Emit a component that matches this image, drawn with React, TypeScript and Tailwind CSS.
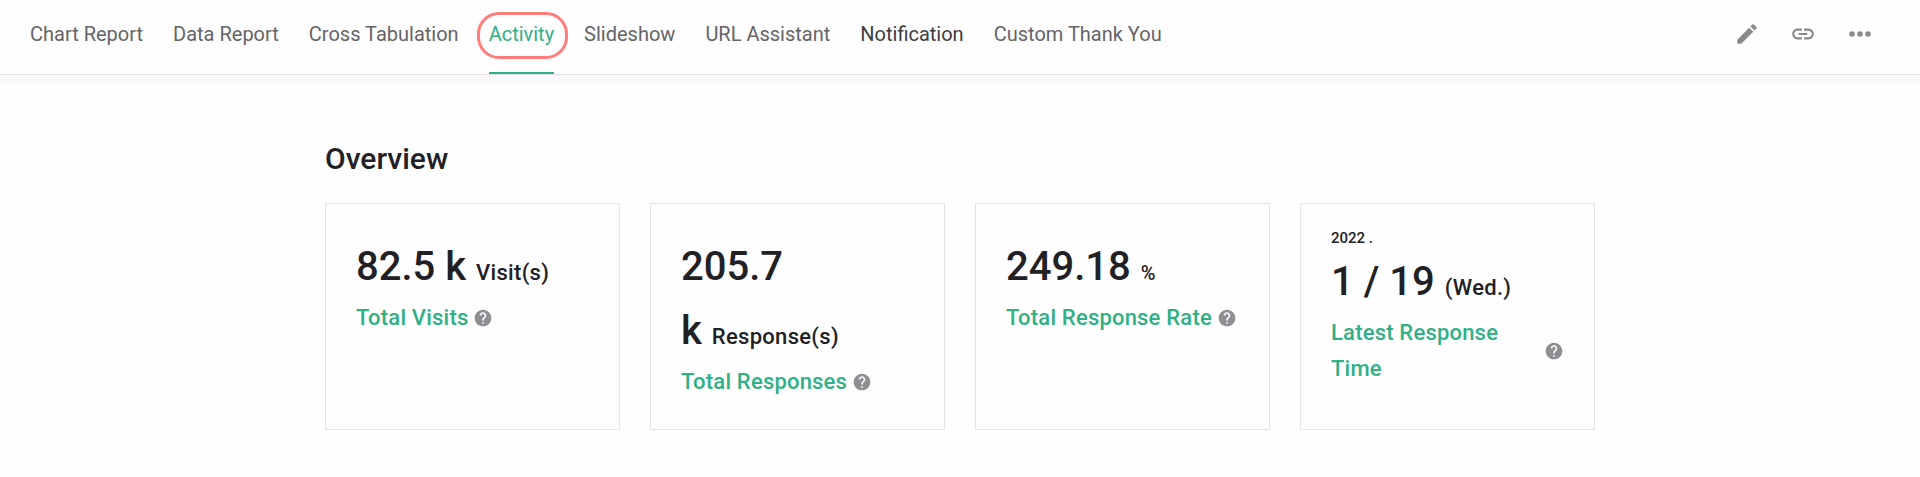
import React from 'react';
import { MdEdit, MdLink, MdHelp } from 'react-icons/md';

const tabs = ['Chart Report', 'Data Report', 'Cross Tabulation', 'Activity', 'Slideshow', 'URL Assistant', 'Notification', 'Custom Thank You'];

const Label = ({ children }: { children: React.ReactNode }) => (
  <div className="flex items-center mt-[1px] text-[22px] leading-[36px] font-medium tracking-[0.2px] text-[#2fb087]">
    <span>{children}</span>
    <MdHelp size={20} className="ml-[5px] shrink-0 text-[#8e8e93]" />
  </div>
);

const Stat = ({ value, suffix, unit, unitClass = 'text-[22px] tracking-[0.3px]' }: { value: string; suffix?: string; unit: string; unitClass?: string }) => (
  <div className="text-[40px] leading-[64px] font-medium text-[#212125]">
    {value}{' '}
    <span className="whitespace-nowrap">
      {suffix && `${suffix} `}
      <span className={`${unitClass} leading-none text-[#212125]`}>{unit}</span>
    </span>
  </div>
);

const Card = ({ children }: { children: React.ReactNode }) => (
  <div className="w-[295px] h-[227px] border border-[#e6e4ea] px-[30px] pt-[31px]">{children}</div>
);

export default function App() {
  return (
    <div className="min-h-[477px] bg-[#fefefe] font-['Roboto',sans-serif]">
      <div className="h-[75px] flex items-start justify-between pl-[30px] pr-[48px] border-b border-[#e2e0e5]">
        <div className="flex gap-[30px]">
          {tabs.map(tab => (
            <div
              key={tab}
              className={`relative h-[74px] pb-[4px] flex items-center text-[20px] border-b-2 ${
                tab === 'Activity'
                  ? 'text-[#2fb087] border-[#2fb087]'
                  : tab === 'Notification'
                    ? 'text-[#3d3d42] border-transparent'
                    : 'text-[#646468] border-transparent'
              }`}
            >
              {tab}
              {tab === 'Activity' && (
                <div className="absolute left-[-12px] right-[-14px] top-[12px] h-[47px] rounded-[22px] border-[3px] border-[#ff7d7b]" />
              )}
            </div>
          ))}
        </div>
        <div className="flex items-center h-[68px] gap-[30px] text-[#8a8a8e]">
          <MdEdit size={26} />
          <MdLink size={26} className="mr-[2px]" />
          <svg width="24" height="8" viewBox="0 0 24 8" fill="currentColor">
            <circle cx="4" cy="4" r="2.8" />
            <circle cx="12" cy="4" r="2.8" />
            <circle cx="20" cy="4" r="2.8" />
          </svg>
        </div>
      </div>
      <div className="h-[10px] bg-[#faf8fb]" />
      <div className="pl-[325px] pt-[58px]">
        <h2 className="text-[30px] leading-[32px] font-medium text-[#212125]">Overview</h2>
        <div className="flex gap-[30px] mt-[28px]">
          <Card>
            <Stat value="82.5" suffix="k" unit="Visit(s)" />
            <Label>Total Visits</Label>
          </Card>
          <Card>
            <Stat value="205.7" suffix="k" unit="Response(s)" />
            <Label>Total Responses</Label>
          </Card>
          <Card>
            <Stat value="249.18" unit="%" unitClass="text-[20px]" />
            <Label>Total Response Rate</Label>
          </Card>
          <Card>
            <div className="-mt-[7px] mb-[2px] text-[15px] leading-[20px] font-medium text-[#212125]">2022 .</div>
            <Stat value="1 / 19" unit="(Wed.)" />
            <div className="flex items-center justify-between mt-[1px] text-[22px] leading-[36px] font-medium tracking-[0.2px] text-[#2fb087]">
              <span className="w-[190px]">Latest Response Time</span>
              <MdHelp size={20} className="shrink-0 text-[#8e8e93]" />
            </div>
          </Card>
        </div>
      </div>
    </div>
  );
}
